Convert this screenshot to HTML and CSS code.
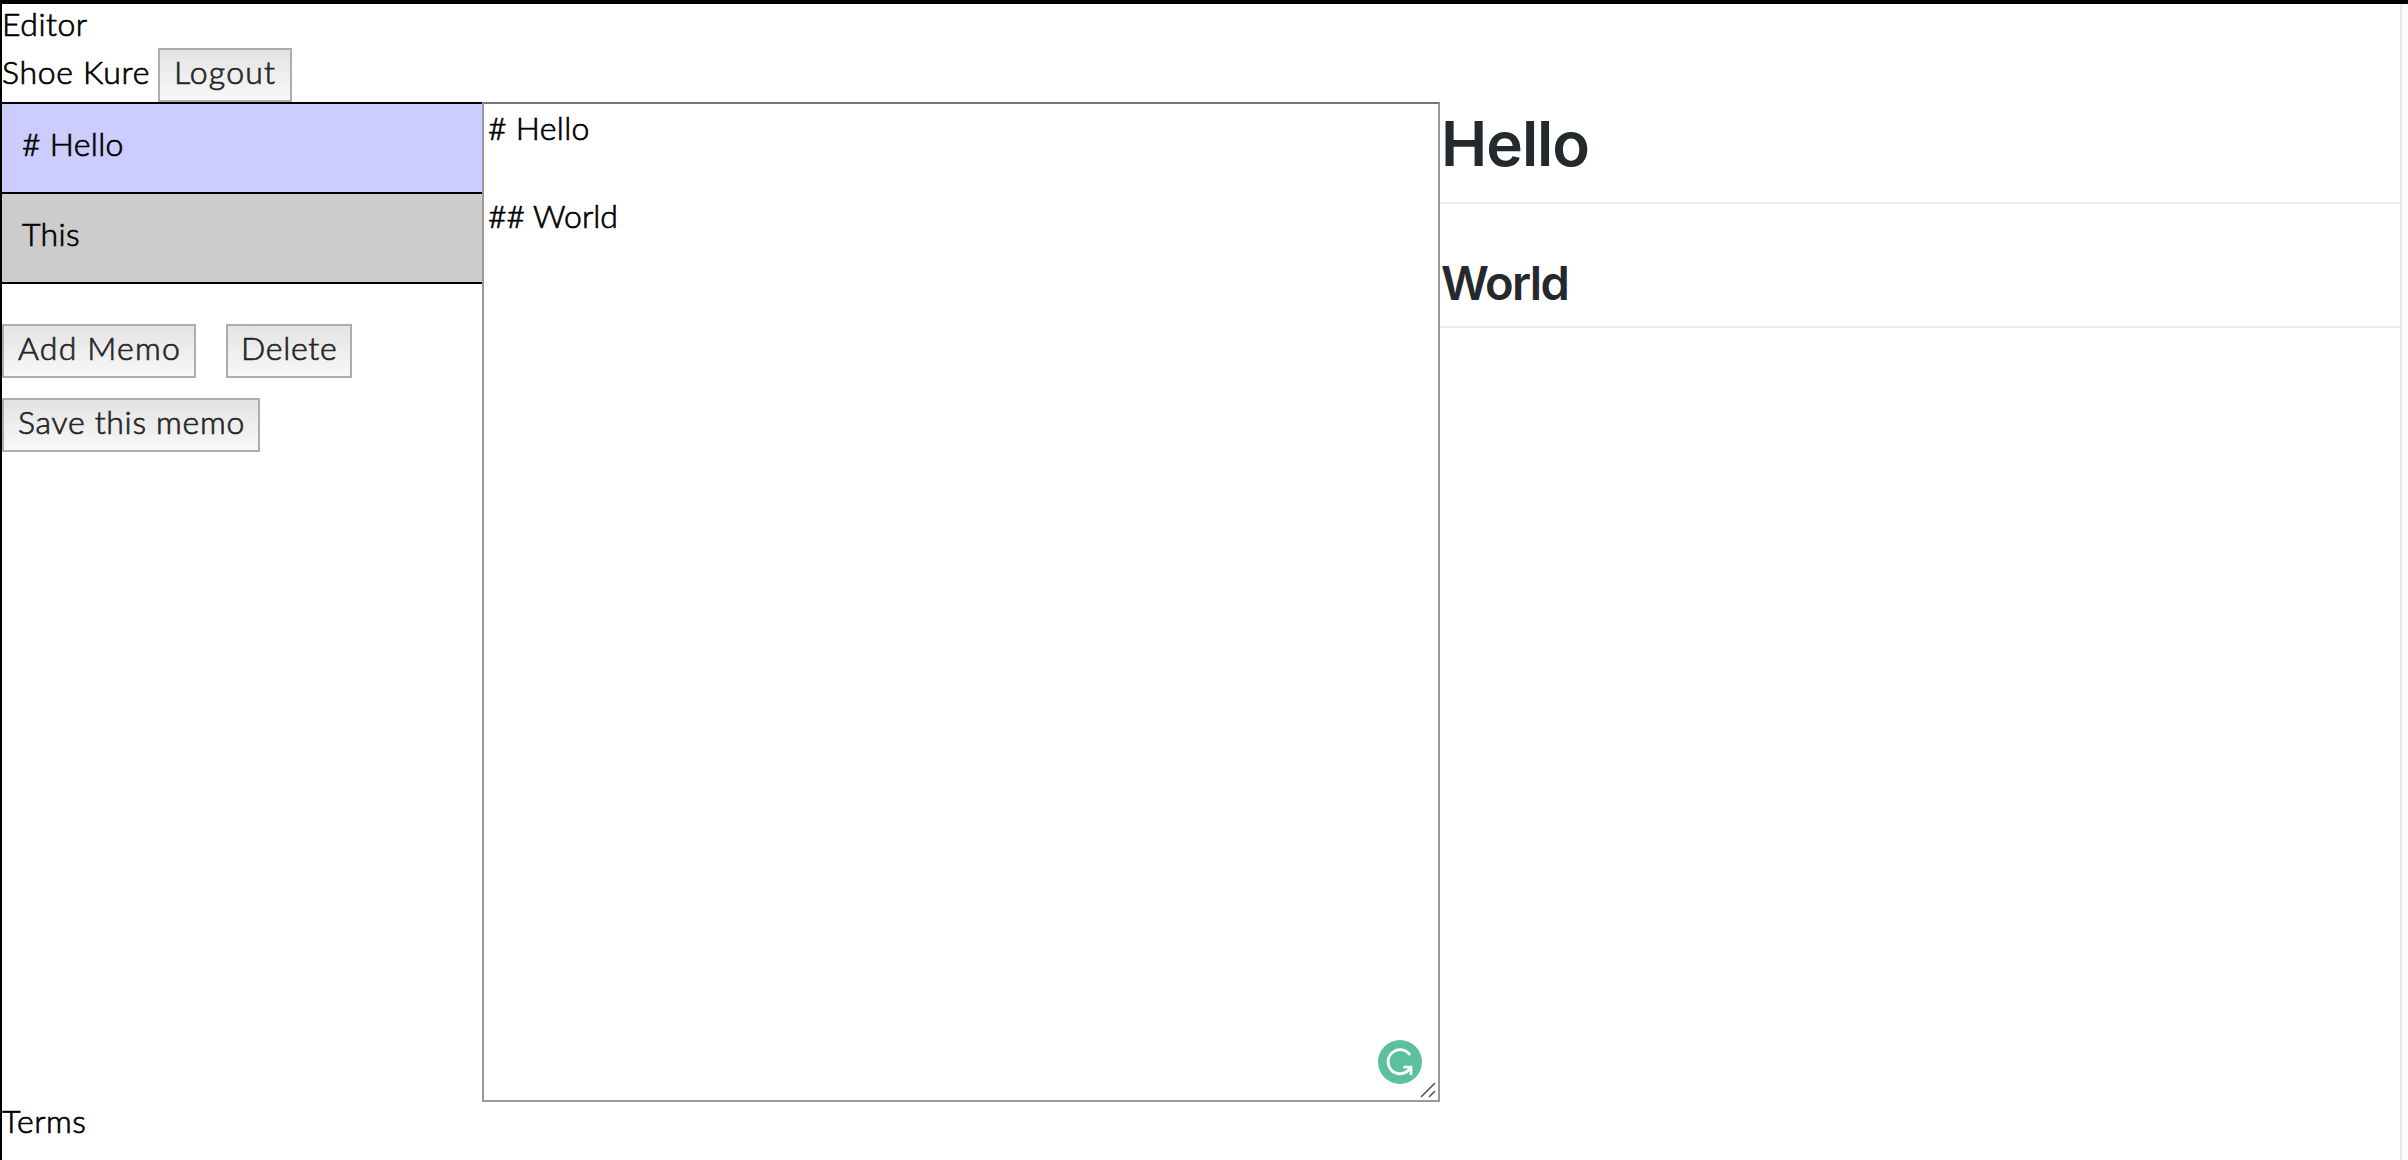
FILE: index.html
```html
<!DOCTYPE html>
<html lang="en">
<head>
<meta charset="utf-8">
<title>Editor</title>
<link rel="stylesheet" href="styles.css">
</head>
<body>
<div class="app">
  <header>
    <div class="title"><span class="t-editor">Editor</span></div>
    <div class="user"><span class="t-user">Shoe Kure</span><button class="btn logout"><span class="t-logout">Logout</span></button></div>
  </header>
  <main class="workspace">
    <aside class="sidebar">
      <ul class="memos">
        <li class="memo selected"><span class="t-hello"># Hello</span></li>
        <li class="memo"><span class="t-this">This</span></li>
      </ul>
      <div class="actions">
        <button class="btn add"><span class="t-add">Add Memo</span></button>
        <button class="btn delete"><span class="t-delete">Delete</span></button>
      </div>
      <button class="btn save"><span class="t-save">Save this memo</span></button>
    </aside>
    <section class="editor">
      <div class="line"><span class="t-hello"># Hello</span></div>
      <div class="line"></div>
      <div class="line"><span class="t-world">## World</span></div>
      <svg class="grammar" viewBox="0 0 44 44"><circle cx="22" cy="22" r="22" fill="#5bc19c"/><path d="M32 15A12 12 0 1 0 29 31.5L33 28M25.3 27.2H33V35" fill="none" stroke="#fff" stroke-width="2.8"/></svg>
      <svg class="grip" viewBox="0 0 16 16"><path d="M1 15L15 1M9 15l6-6" fill="none" stroke="#555" stroke-width="1.6"/></svg>
    </section>
    <article class="preview">
      <h1><span>Hello</span></h1>
      <h2><span>World</span></h2>
    </article>
  </main>
  <footer><span class="t-terms">Terms</span></footer>
</div>
</body>
</html>
```
FILE: styles.css
```css
* { box-sizing: border-box; }
body {
  margin: 0;
  height: 1160px;
  overflow: hidden;
  background: #fafafa;
  border-top: 4px solid #000;
  border-left: 2px solid #000;
  font: 300 32px/44px Lato, sans-serif;
  -webkit-text-stroke: 0.7px currentColor;
  color: #000;
}
.app {
  width: 2400px;
  height: 1156px;
  background: #fff;
  border-right: 2px solid #e8e8e8;
}
.title { height: 44px; line-height: 39px; }
.user { height: 54px; display: flex; align-items: center; }
.user > span { width: 156px; padding-bottom: 6px; }
span { white-space: nowrap; }
.btn {
  height: 54px;
  padding: 0 0 6px 14px;
  border: 2px solid #adadad;
  background: linear-gradient(#e3e3e3, #f8f8f8);
  color: #262626;
  font: inherit;
  text-align: left;
}
.logout { width: 134px; }
.workspace {
  display: grid;
  grid-template-columns: 480px 958px 1fr;
  height: 1000px;
}
.memos { list-style: none; margin: 0; padding: 0; border-top: 2px solid #000; }
.memo {
  height: 90px;
  padding: 18px 20px;
  background: #ccc;
  border-bottom: 2px solid #000;
}
.selected { background: #ccf; }
.actions { display: flex; gap: 30px; padding: 40px 0 20px; }
.add { width: 194px; }
.delete { width: 126px; padding-left: 13px; }
.save { display: block; width: 258px; }
.editor {
  position: relative;
  padding: 2px 4px;
  border: 2px solid #999;
  border-top-color: #767676;
}
.line { height: 44px; }
.grammar { position: absolute; right: 16px; bottom: 16px; width: 44px; height: 44px; }
.grip { position: absolute; right: 2px; bottom: 2px; width: 16px; height: 16px; }
.preview {
  font-family: Inter, sans-serif;
  color: #24292e;
  -webkit-text-stroke: 0;
}
h1, h2 {
  margin: 0;
  font-weight: 600;
  border-bottom: 2px solid #eaecef;
}
h1 { height: 102px; padding-left: 1px; font-size: 62px; line-height: 83px; letter-spacing: -1px; }
h2 { height: 76px; padding-left: 1px; margin-top: 48px; font-size: 47px; line-height: 61px; letter-spacing: -1.6px; }
footer { height: 44px; line-height: 38px; }

.t-editor, .t-terms { letter-spacing: 0.5px; }
.t-user, .t-save { letter-spacing: 0.7px; }
.t-logout, .t-add { letter-spacing: 1.2px; }
.t-delete { letter-spacing: 0.7px; }
.t-hello, .t-this { letter-spacing: 0.3px; }
```
